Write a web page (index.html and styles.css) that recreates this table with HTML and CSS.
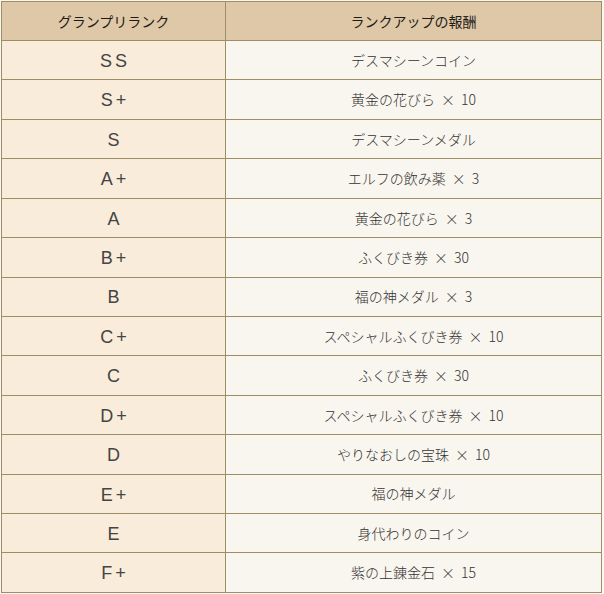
FILE: index.html
```html
<!DOCTYPE html>
<html lang="ja">
<head>
<meta charset="utf-8">
<title>グランプリランク</title>
<link rel="stylesheet" href="styles.css">
</head>
<body>
<table class="rank-table">
  <thead>
    <tr><th class="col-rank">グランプリランク</th><th class="col-reward">ランクアップの報酬</th></tr>
  </thead>
  <tbody>
    <tr><td class="rank">SS</td><td class="reward">デスマシーンコイン</td></tr>
    <tr><td class="rank">S+</td><td class="reward">黄金の花びら × 10</td></tr>
    <tr><td class="rank">S</td><td class="reward">デスマシーンメダル</td></tr>
    <tr><td class="rank">A+</td><td class="reward">エルフの飲み薬 × 3</td></tr>
    <tr><td class="rank">A</td><td class="reward">黄金の花びら × 3</td></tr>
    <tr><td class="rank">B+</td><td class="reward">ふくびき券 × 30</td></tr>
    <tr><td class="rank">B</td><td class="reward">福の神メダル × 3</td></tr>
    <tr><td class="rank">C+</td><td class="reward">スペシャルふくびき券 × 10</td></tr>
    <tr><td class="rank">C</td><td class="reward">ふくびき券 × 30</td></tr>
    <tr><td class="rank">D+</td><td class="reward">スペシャルふくびき券 × 10</td></tr>
    <tr><td class="rank">D</td><td class="reward">やりなおしの宝珠 × 10</td></tr>
    <tr><td class="rank">E+</td><td class="reward">福の神メダル</td></tr>
    <tr><td class="rank">E</td><td class="reward">身代わりのコイン</td></tr>
    <tr><td class="rank">F+</td><td class="reward">紫の上錬金石 × 15</td></tr>
  </tbody>
</table>
</body>
</html>
```
FILE: styles.css
```css
html, body {
  margin: 0;
  padding: 0;
  background: #faf7f0;
}
body {
  padding: 1px;
  font-family: "Noto Sans CJK JP", "Liberation Sans", sans-serif;
  color: #333;
}
.rank-table {
  width: 601px;
  border-collapse: collapse;
  table-layout: fixed;
}
.rank-table th,
.rank-table td {
  border: 1px solid #9d8e68;
  text-align: center;
  vertical-align: middle;
  padding: 0;
  line-height: 1.2;
}
.rank-table thead tr {
  height: 39px;
}
.rank-table tbody tr {
  height: 39.43px;
}
.rank-table th {
  background: #dfc8a7;
  font-size: 14px;
  font-weight: 400;
  color: #1e1a16;
}
.col-rank {
  width: 223px;
}
.rank {
  background: #f9ecda;
  font-family: "Liberation Sans", Arial, sans-serif;
  font-size: 18px;
  letter-spacing: 3px;
  text-indent: 3px;
  padding-top: 3px !important;
  color: #444;
}
.reward {
  background: #f9f6ef;
  font-size: 14px;
  font-weight: 300;
  word-spacing: 3px;
  color: #333;
}
```
